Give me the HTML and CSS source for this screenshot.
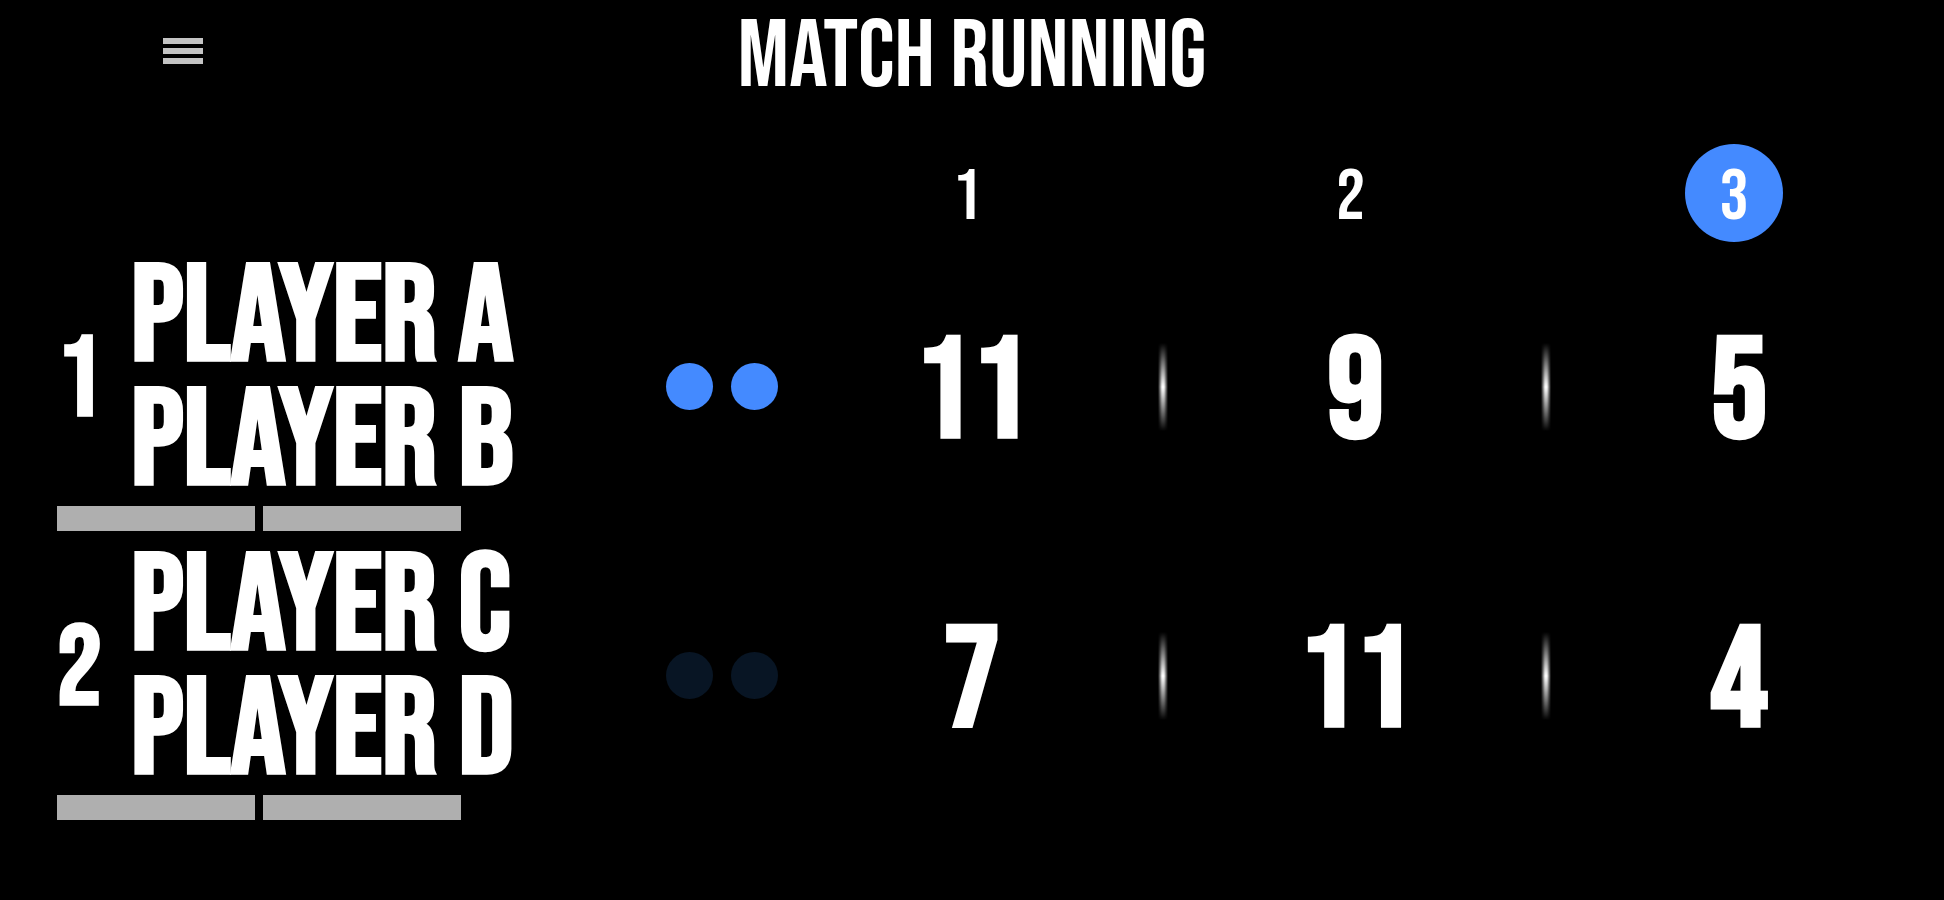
FILE: index.html
```
<!DOCTYPE html>
<html lang="en">
<head>
    <meta charset="UTF-8">
    <meta name="viewport" content="width=device-width, initial-scale=1.0">
    <title>Match Running</title>
    <link rel="stylesheet" href="styles.css">
</head>
<body>
    <header>
        <button class="menu" type="button" aria-label="Menu">
            <span></span>
            <span></span>
            <span></span>
        </button>
        <h1>MATCH RUNNING</h1>
    </header>
    <main>
        <table class="scoreboard">
            <thead>
                <tr>
                    <td class="team"></td>
                    <td class="wins"></td>
                    <th scope="col"><span class="set">1</span></th>
                    <th scope="col"><span class="set">2</span></th>
                    <th scope="col"><span class="set current">3</span></th>
                </tr>
            </thead>
            <tbody>
                <tr>
                    <th class="team" scope="row">
                        <div class="names">
                            <span class="rank">1</span>
                            <div>
                                <div class="player">PLAYER A</div>
                                <div class="player">PLAYER B</div>
                            </div>
                        </div>
                        <div class="bars"><span></span><span></span></div>
                    </th>
                    <td class="wins">
                        <div class="dots"><span class="on"></span><span class="on"></span></div>
                    </td>
                    <td class="score">11</td>
                    <td class="score">9</td>
                    <td class="score">5</td>
                </tr>
                <tr>
                    <th class="team" scope="row">
                        <div class="names">
                            <span class="rank">2</span>
                            <div>
                                <div class="player">PLAYER C</div>
                                <div class="player">PLAYER D</div>
                            </div>
                        </div>
                        <div class="bars"><span></span><span></span></div>
                    </th>
                    <td class="wins">
                        <div class="dots"><span></span><span></span></div>
                    </td>
                    <td class="score">7</td>
                    <td class="score">11</td>
                    <td class="score">4</td>
                </tr>
            </tbody>
        </table>
    </main>
</body>
</html>
```
FILE: styles.css
```
* {
    box-sizing: border-box;
}
body {
    margin: 0;
    background: #000;
    color: #fff;
    font-family: "Bebas Neue", "Liberation Sans", sans-serif;
}
header {
    display: grid;
    grid-template-columns: 1fr auto 1fr;
    align-items: center;
    margin-bottom: 28px;
}
h1 {
    margin: 0;
    font-size: 96px;
    font-weight: normal;
    line-height: 116px;
}
.menu {
    display: flex;
    flex-direction: column;
    gap: 4px;
    width: 40px;
    margin-left: 8.4vw;
    margin-bottom: 14px;
    padding: 0;
    border: 0;
    background: none;
}
.menu span {
    width: 100%;
    height: 6px;
    background: #c4c4c4;
}
main {
    padding-right: 13px;
}
.scoreboard {
    width: 100%;
    table-layout: fixed;
    border-collapse: collapse;
}
.scoreboard td, .scoreboard th {
    padding: 0;
    text-align: center;
}
.scoreboard thead th {
    padding-right: 10px;
    font-weight: normal;
}
.scoreboard .team {
    width: 34.4%;
    padding-left: 57px;
    text-align: left;
    vertical-align: top;
}
.scoreboard .wins {
    width: 6%;
}
.set {
    display: block;
    width: 98px;
    height: 98px;
    margin: 0 auto;
    border-radius: 50%;
    font-size: 72px;
    line-height: 108px;
}
.current {
    background: #448aff;
}
.scoreboard tbody tr {
    height: 289px;
}
.names {
    display: flex;
    align-items: center;
    padding-top: 16px;
}
.rank {
    width: 74px;
    font-size: 112px;
    line-height: 124px;
}
.player {
    font-size: 136px;
    line-height: 124px;
    white-space: nowrap;
}
.bars {
    display: flex;
    gap: 8px;
}
.bars span {
    width: 198px;
    height: 25px;
    background: #afafaf;
}
.dots {
    display: flex;
    justify-content: center;
    gap: 18px;
}
.dots span {
    width: 47px;
    height: 47px;
    border-radius: 50%;
    background: #081524;
}
.dots .on {
    background: #448aff;
}
.scoreboard .score {
    position: relative;
    padding-top: 16px;
    font-size: 142px;
    font-weight: bold;
    line-height: 160px;
}
/* glow line between two sets */
.score:not(:last-child)::after {
    content: "";
    position: absolute;
    top: calc(50% - 44px);
    right: -4px;
    width: 10px;
    height: 88px;
    background: linear-gradient(transparent, #fff, transparent);
    mask-image: linear-gradient(to right, transparent, #000 40%, #000 60%, transparent);
}
```
